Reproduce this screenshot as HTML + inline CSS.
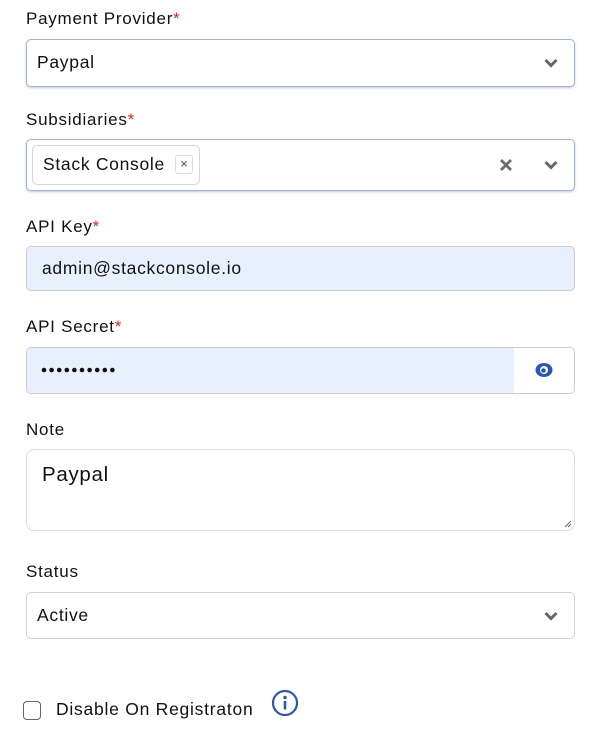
<!DOCTYPE html>
<html><head><style>
*{box-sizing:border-box;margin:0;padding:0}
body{width:603px;height:739px;background:#fff;font-family:"Liberation Sans",sans-serif;color:#111;position:relative;overflow:hidden}
.a{position:absolute}
.lbl{font-size:17px;left:26px;letter-spacing:0.75px}
.lbl b{color:#e02020;font-weight:normal}
.box{left:26px;width:549px;border:1px solid #d3d3d6;border-radius:5px;background:#fff}
.foc{border:1px solid #9fb4e0;box-shadow:0 1px 2px rgba(60,90,160,.35)}
.chev{position:absolute;right:16px;top:50%;margin-top:-5px}
.t{position:absolute;font-size:17.5px;letter-spacing:0.7px}
</style></head><body>
<div class="a lbl" style="top:9px">Payment Provider<b>*</b></div>
<div class="a box foc" style="top:39px;height:48px">
 <div class="t" style="left:10px;top:12px">Paypal</div>
 <svg class="chev" width="14" height="10" viewBox="0 0 14 10"><path d="M1.5 2L7 7.5L12.5 2" fill="none" stroke="#66666b" stroke-width="3"/></svg>
</div>
<div class="a lbl" style="top:110px">Subsidiaries<b>*</b></div>
<div class="a box foc" style="top:139px;height:52px">
 <div class="a" style="left:5px;top:5px;width:168px;height:40px;border:1px solid #d8d8dc;border-radius:5px"></div>
 <div class="t" style="left:16px;top:14px">Stack Console</div>
 <div class="a" style="left:148px;top:15px;width:18px;height:19px;border:1px solid #ddd;border-radius:3px;font-size:13px;text-align:center;line-height:16px;color:#555">×</div>
 <svg class="a" style="left:472px;top:18px" width="14" height="14" viewBox="0 0 14 14"><path d="M2 2L12 12M12 2L2 12" stroke="#6b6b70" stroke-width="2.8"/></svg>
 <svg class="chev" width="14" height="10" viewBox="0 0 14 10"><path d="M1.5 2L7 7.5L12.5 2" fill="none" stroke="#66666b" stroke-width="3"/></svg>
</div>
<div class="a lbl" style="top:217px">API Key<b>*</b></div>
<div class="a box" style="top:246px;height:45px;background:#e8f0fe;border-color:#ccc">
 <div class="t" style="left:15px;top:11px">admin@stackconsole.io</div>
</div>
<div class="a lbl" style="top:317px">API Secret<b>*</b></div>
<div class="a box" style="top:347px;height:47px;border-color:#ccc;overflow:hidden">
 <div class="a" style="left:0;top:0;width:487px;height:45px;background:#e8f0fe"></div>
 <svg class="a" style="left:14px;top:19px" width="80" height="6" viewBox="0 0 80 6">
  <g fill="#111"><circle cx="3" cy="3" r="2.3"/><circle cx="10.6" cy="3" r="2.3"/><circle cx="18.2" cy="3" r="2.3"/><circle cx="25.8" cy="3" r="2.3"/><circle cx="33.4" cy="3" r="2.3"/><circle cx="41" cy="3" r="2.3"/><circle cx="48.6" cy="3" r="2.3"/><circle cx="56.2" cy="3" r="2.3"/><circle cx="63.8" cy="3" r="2.3"/><circle cx="71.4" cy="3" r="2.3"/></g></svg>
 <svg class="a" style="left:507px;top:13px" width="20" height="18" viewBox="0 0 20 18"><ellipse cx="10" cy="9" rx="8.5" ry="7" fill="#2a56b8"/><circle cx="10" cy="9" r="4" fill="#fff"/><circle cx="9.5" cy="9.5" r="2.3" fill="#2a56b8"/></svg>
</div>
<div class="a lbl" style="top:420px">Note</div>
<div class="a box" style="top:449px;height:82px;border-radius:8px;border-color:#ddd">
 <div class="t" style="left:15px;top:13px;font-size:20.5px">Paypal</div>
 <svg class="a" style="right:2px;bottom:2px" width="8" height="8" viewBox="0 0 8 8"><path d="M1 7L7 1M4 7L7 4" stroke="#666" stroke-width="1"/></svg>
</div>
<div class="a lbl" style="top:562px">Status</div>
<div class="a box" style="top:592px;height:47px">
 <div class="t" style="left:10px;top:12px">Active</div>
 <svg class="chev" width="14" height="10" viewBox="0 0 14 10"><path d="M1.5 2L7 7.5L12.5 2" fill="none" stroke="#66666b" stroke-width="3"/></svg>
</div>
<div class="a" style="left:23px;top:701px;width:18px;height:19px;border:1.5px solid #666;border-radius:4px"></div>
<div class="a" style="left:56px;top:699px;font-size:17.5px;letter-spacing:0.75px">Disable On Registraton</div>
<svg class="a" style="left:271px;top:689px" width="28" height="28" viewBox="0 0 28 28"><circle cx="14" cy="14" r="12" fill="none" stroke="#2a56b8" stroke-width="2.2"/><circle cx="14" cy="8.5" r="1.7" fill="#2a56b8"/><rect x="12.7" y="12" width="2.6" height="8.5" fill="#2a56b8"/></svg>
</body></html>
